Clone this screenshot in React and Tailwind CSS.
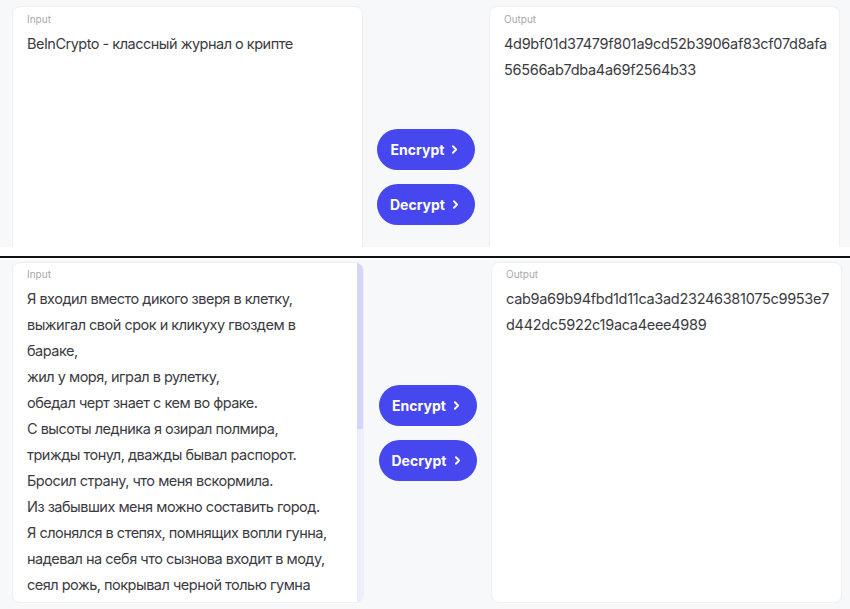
import { ChevronRight } from "lucide-react";

const poem = [
  "Я входил вместо дикого зверя в клетку,",
  "выжигал свой срок и кликуху гвоздем в",
  "бараке,",
  "жил у моря, играл в рулетку,",
  "обедал черт знает с кем во фраке.",
  "С высоты ледника я озирал полмира,",
  "трижды тонул, дважды бывал распорот.",
  "Бросил страну, что меня вскормила.",
  "Из забывших меня можно составить город.",
  "Я слонялся в степях, помнящих вопли гунна,",
  "надевал на себя что сызнова входит в моду,",
  "сеял рожь, покрывал черной толью гумна",
];

function Label({ children }) {
  return <div className="h-[14px] text-[10px] leading-[14px] text-[#a8a8ad]">{children}</div>;
}

function Lines({ lines, hash = false }) {
  return (
    <div
      className={[
        "mt-[5px] text-[14.5px] leading-[26px] text-[#3b3b42]",
        hash ? "tracking-[-0.3px]" : "tracking-[-0.5px]",
      ].join(" ")}
    >
      {lines.map((line, i) => (
        <div key={i} className="whitespace-nowrap">
          {line}
        </div>
      ))}
    </div>
  );
}

function ActionButton({ children }) {
  return (
    <button
      type="button"
      className="flex h-[41px] w-[98px] items-center justify-center gap-1 rounded-full bg-[#4647ef] text-[14px] font-bold text-white"
    >
      {children}
      <ChevronRight className="h-[13px] w-[13px]" strokeWidth={3.4} />
    </button>
  );
}

function Buttons() {
  return (
    <div className="flex flex-col gap-[14px]">
      <ActionButton>Encrypt</ActionButton>
      <ActionButton>Decrypt</ActionButton>
    </div>
  );
}

export default function App() {
  return (
    <div
      className="h-[609px] w-[850px] overflow-hidden bg-white"
      style={{ fontFamily: "Inter, 'Noto Sans', sans-serif" }}
    >
      {/* first shot */}
      <div className="h-[247px] overflow-hidden bg-[#f7f8fa] pt-[6px]">
        <div className="flex h-[341px] items-center pl-[12px]">
          <div className="h-full w-[351px] rounded-lg border border-[#eef0f4] bg-white px-[14px] pt-[5px]">
            <Label>Input</Label>
            <Lines lines={["BeInCrypto - классный журнал о крипте"]} />
          </div>
          <div className="flex w-[126px] justify-center">
            <Buttons />
          </div>
          <div className="h-full w-[351px] rounded-lg border border-[#eef0f4] bg-white px-[14px] pt-[5px]">
            <Label>Output</Label>
            <Lines hash lines={["4d9bf01d37479f801a9cd52b3906af83cf07d8afa", "56566ab7dba4a69f2564b33"]} />
          </div>
        </div>
      </div>

      <div className="h-[9px]" />
      <div className="h-[2px] bg-[#111]" />
      <div className="h-[2px]" />

      {/* second shot */}
      <div className="h-[349px] bg-[#f7f8fa] pt-[2px]">
        <div className="flex h-[341px] items-center pl-[12px]">
          <div className="flex h-full w-[352px] overflow-hidden rounded-lg border border-[#eef0f4] bg-white">
            <div className="flex-1 px-[14px] pt-[4px]">
              <Label>Input</Label>
              <Lines lines={poem} />
            </div>
            <div className="flex w-[6px] flex-col bg-[#eceefd]">
              <div className="h-[166px] bg-[#d3d5fb]" />
            </div>
          </div>
          <div className="flex w-[127px] justify-center">
            <Buttons />
          </div>
          <div className="h-full w-[351px] rounded-lg border border-[#eef0f4] bg-white px-[14px] pt-[4px]">
            <Label>Output</Label>
            <Lines hash lines={["cab9a69b94fbd1d11ca3ad23246381075c9953e7", "d442dc5922c19aca4eee4989"]} />
          </div>
        </div>
      </div>
    </div>
  );
}
